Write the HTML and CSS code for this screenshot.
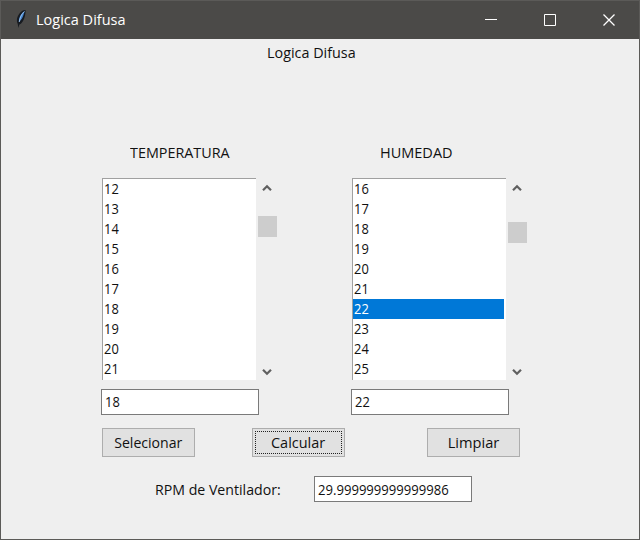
FILE: index.html
```html
<!DOCTYPE html>
<html lang="es">
<head>
<meta charset="utf-8">
<title>Logica Difusa</title>
<link rel="stylesheet" href="styles.css">
</head>
<body>
<div class="window">
  <header class="titlebar">
    <svg class="feather" width="12" height="20" viewBox="0 0 12 20"><path d="M10.500 1C7 1 3.800 4.500 2.500 8c-.9 2.500-.8 5 .2 6.800L3.400 19l.8-3.300C7 14.500 9 11 9.800 7.500c.5-2.500 1-5 .7-6.500z" fill="#161a20"/><path d="M9.800 2C7 3.500 4.500 7 4 10.500l-.2 2.500C6.500 11 8 8 8.800 5z" fill="#4585cf"/><path d="M9.300 2.500C6.500 5 5 8.500 4.300 13" fill="none" stroke="#a9cbef" stroke-width=".8"/></svg>
    <span class="caption"><span class="t">Logica Difusa</span></span>
    <div class="controls">
      <svg width="12" height="12" viewBox="0 0 12 12"><path d="M0 5.500H12"/></svg>
      <svg width="12" height="12" viewBox="0 0 12 12"><path d="M.5.500h11v11H.5z"/></svg>
      <svg width="12" height="12" viewBox="0 0 12 12"><path d="M.5.500l11 11M11.500.500l-11 11" stroke-width="1.300"/></svg>
    </div>
  </header>
  <main>
    <h1><span class="t heading">Logica Difusa</span></h1>
    <div class="columns">
      <section>
        <h2><span class="t temp">TEMPERATURA</span></h2>
        <div class="picker">
          <ul class="list"><li><span class="t">12</span></li><li><span class="t">13</span></li><li><span class="t">14</span></li><li><span class="t">15</span></li><li><span class="t">16</span></li><li><span class="t">17</span></li><li><span class="t">18</span></li><li><span class="t">19</span></li><li><span class="t">20</span></li><li><span class="t">21</span></li></ul>
          <div class="scroll">
            <svg width="10" height="8" viewBox="0 0 10 8"><path d="M1 6.300L5 2.300l4 4"/></svg>
            <div class="track"><div class="thumb"></div></div>
            <svg width="10" height="8" viewBox="0 0 10 8"><path d="M1 1.700l4 4 4-4"/></svg>
          </div>
        </div>
        <div class="entry"><span class="t">18</span></div>
      </section>
      <section>
        <h2><span class="t hum">HUMEDAD</span></h2>
        <div class="picker">
          <ul class="list"><li><span class="t">16</span></li><li><span class="t">17</span></li><li><span class="t">18</span></li><li><span class="t">19</span></li><li><span class="t">20</span></li><li><span class="t">21</span></li><li class="selected"><span class="t">22</span></li><li><span class="t">23</span></li><li><span class="t">24</span></li><li><span class="t">25</span></li></ul>
          <div class="scroll">
            <svg width="10" height="8" viewBox="0 0 10 8"><path d="M1 6.300L5 2.300l4 4"/></svg>
            <div class="track"><div class="thumb low"></div></div>
            <svg width="10" height="8" viewBox="0 0 10 8"><path d="M1 1.700l4 4 4-4"/></svg>
          </div>
        </div>
        <div class="entry"><span class="t">22</span></div>
      </section>
    </div>
    <div class="actions">
      <button><span class="t select">Selecionar</span></button>
      <button class="focused"><span class="t calc">Calcular</span></button>
      <button class="last"><span class="t clear">Limpiar</span></button>
    </div>
    <div class="result">
      <label><span class="t rpm">RPM de Ventilador:</span></label>
      <div class="entry"><span class="t value">29.999999999999986</span></div>
    </div>
  </main>
</div>
</body>
</html>
```
FILE: styles.css
```css
* { box-sizing: border-box; }
body { margin: 0; font: 15px/20px "Open Sans", "Noto Sans", sans-serif; color: #111; }
.window { width: 640px; height: 540px; border: 1px solid #5b5a58; background: #efefef; }
.titlebar { height: 38px; background: #4b4a48; display: flex; align-items: center; padding-left: 14px; }
.feather { margin-top: -2px; }
.caption { margin: -2px 0 0 9px; color: #fff; flex: 1; }
.controls { display: flex; gap: 47px; margin-right: 24px; }
.controls svg { fill: none; stroke: #fff; stroke-width: 1; }
.t { display: inline-block; white-space: nowrap; transform: scaleX(.86); transform-origin: left center; }
.caption .t { transform: scaleX(.967); }
.heading { transform: scaleX(.957); }
.temp { transform: scaleX(.957); }
.hum { transform: scaleX(.967); }
.rpm { transform: scaleX(.943); }
.value { transform: scaleX(.873); }
h1, h2 { font-size: 15px; font-weight: 400; margin: 0; line-height: 20px; }
h1 { padding: 3px 0 0 266px; }
.columns { display: grid; grid-template-columns: 250px 250px; margin: 80px 0 0 100px; }
h2 { padding-left: 29px; }
.picker { display: flex; margin: 16px 0 0 1px; }
.list { list-style: none; margin: 0 1px 0 0; padding: 0; width: 154px; height: 202px; background: #fff; border: solid #a0a0a0; border-width: 1px 0 0 1px; }
.list li { height: 20px; width: 151px; padding-left: 1px; line-height: 18px; }
.list .selected { background: #0078d7; color: #fff; }
.scroll { width: 19px; margin-left: 1px; padding: 6px 0 4px; display: flex; flex-direction: column; align-items: center; }
.scroll svg { fill: none; stroke: #606060; stroke-width: 2.2; flex: none; margin-right: 2px; }
.track { flex: 1; width: 19px; padding-top: 24px; }
.thumb { height: 21px; background: #cdcdcd; }
.low { margin-top: 6px; }
.entry { width: 158px; height: 26px; border: 1px solid #7a7a7a; background: #fff; margin-top: 9px; padding: 1px 3px; }
.actions { display: flex; margin: 13px 0 0 101px; }
button { width: 93px; height: 29px; padding: 0 0 2px; border: 1px solid #adadad; background: #e1e1e1; font: inherit; color: inherit; margin-right: 57px; }
button .t { transform-origin: center; }
.select { transform: scaleX(.94); }
.calc { transform: scaleX(.965); }
.clear { transform: scaleX(.975); }
.last { margin-left: 25px; margin-right: 0; }
.focused { outline: 1px dotted #222; outline-offset: -4px; }
.result { display: flex; align-items: center; margin: 19px 0 0 154px; }
label { width: 159px; }
.result .entry { margin: 0; padding-top: 2px; }
```
